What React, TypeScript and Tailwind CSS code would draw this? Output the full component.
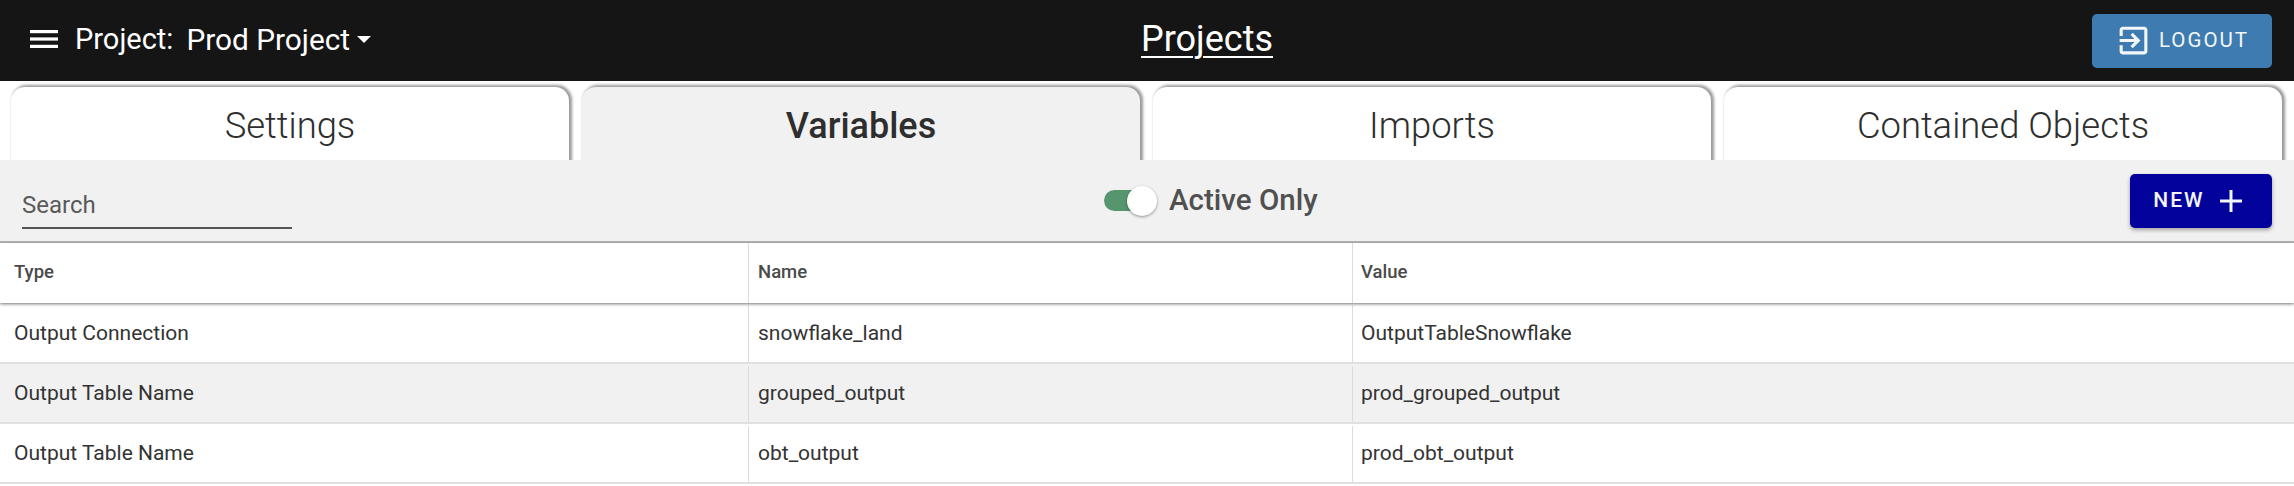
import React from 'react'

const TABS = ['Settings', 'Variables', 'Imports', 'Contained Objects']

const ROWS = [
  { type: 'Output Connection', name: 'snowflake_land', value: 'OutputTableSnowflake' },
  { type: 'Output Table Name', name: 'grouped_output', value: 'prod_grouped_output' },
  { type: 'Output Table Name', name: 'obt_output', value: 'prod_obt_output' },
]

const Header = () => (
  <div className="relative flex h-[81px] items-center justify-between bg-[#151515] pr-[22px] pl-[30px] text-white">
    <div className="mt-[-2px] flex items-center">
      <svg width="28" height="22" viewBox="0 0 28 22" fill="white">
        <rect x="0" y="2" width="28" height="3.2" />
        <rect x="0" y="9.4" width="28" height="3.2" />
        <rect x="0" y="16.8" width="28" height="3.2" />
      </svg>
      <span className="ml-[17px] text-[29px] leading-none">Project:</span>
      <span className="ml-[13px] text-[29.8px] leading-none">Prod Project</span>
      <svg className="ml-[7px]" width="14" height="7" viewBox="0 0 14 7" fill="white">
        <path d="M0 0h14L7 7z" />
      </svg>
    </div>
    <a className="absolute top-[17px] left-[1141px] text-[36px] leading-[44px] underline underline-offset-[5px] decoration-[2px]">Projects</a>
    <button className="flex h-[54px] w-[180px] items-center justify-center gap-[7px] rounded-[5px] bg-[#3e7bb0] text-[20.5px] tracking-[2px] text-[#f4f7fa]">
      <svg width="37" height="37" viewBox="0 0 24 24" fill="currentColor">
        <path d="M10.09 15.59L11.5 17l5-5-5-5-1.41 1.41L12.67 11H3v2h9.67l-2.58 2.59zM19 3H5c-1.11 0-2 .9-2 2v4h2V5h14v14H5v-4H3v4c0 1.1.89 2 2 2h14c1.1 0 2-.9 2-2V5c0-1.1-.9-2-2-2z" />
      </svg>
      LOGOUT
    </button>
  </div>
)

const Tabs = () => (
  <div className="flex h-[79px] gap-[13px] overflow-hidden bg-white pt-[6px] pr-[11px] pl-[11px]">
    {TABS.map((t) => (
      <div
        key={t}
        className={
          'flex h-[100px] w-[558px] justify-center rounded-t-[14px] pt-[16px] leading-[46px] text-[#2e2e2e] shadow-[2px_-1px_3px_1px_rgba(0,0,0,0.4)] ' +
          (t === 'Variables' ? 'bg-[#f1f1f1] text-[36px] font-medium' : 'bg-white text-[36.4px] font-light')
        }
      >
        {t}
      </div>
    ))}
  </div>
)

const Toolbar = () => (
  <div className="relative flex h-[83px] items-center justify-between border-b-2 border-[#b5b5b5] bg-[#f1f1f1] pr-[22px] pl-[22px]">
    <div className="mt-[2px] flex h-[54px] w-[270px] items-center border-b-2 border-[#555555] pt-[8px] text-[24px] text-[#5a5a5a]">
      Search
    </div>
    <div className="absolute left-[1104px] flex items-center">
      <div className="relative h-[21px] w-[44px] rounded-full bg-[#55966f]">
        <div className="absolute top-[-4px] right-[-9px] h-[30px] w-[30px] rounded-full bg-white shadow-[0_1px_3px_rgba(0,0,0,0.4)]" />
      </div>
      <span className="ml-[21px] text-[29.5px] font-medium leading-none text-[#505050]">Active Only</span>
    </div>
    <button className="flex h-[54px] w-[142px] items-center justify-center gap-[15px] rounded-[5px] bg-[#03039b] pr-[7px] text-[21px] font-medium tracking-[2px] text-[#f4f4fb] shadow-[0_2px_4px_rgba(0,0,0,0.35)]">
      NEW
      <svg width="22" height="22" viewBox="0 0 22 22" fill="currentColor">
        <rect x="0" y="9.5" width="22" height="3" />
        <rect x="9.5" y="0" width="3" height="22" />
      </svg>
    </button>
  </div>
)

const Table = () => (
  <div className="text-[21px] text-[#333333]">
    <div className="relative z-10 grid h-[60px] grid-cols-[749px_604px_1fr] items-stretch text-[18.5px] font-medium text-[#4a4a4a] shadow-[0_1px_3px_rgba(0,0,0,0.55)]">
      {['Type', 'Name', 'Value'].map((h, i) => (
        <div key={h} className={'flex items-center ' + (i === 0 ? 'pl-[14px] ' : i === 1 ? 'pl-[9px] ' : 'pl-[8px] ') + (i < 2 ? 'border-r border-[#dcdcdc]' : '')}>
          {h}
        </div>
      ))}
    </div>
    {ROWS.map((r, i) => (
      <div
        key={r.name}
        className={
          'grid grid-cols-[749px_604px_1fr] border-b-2 border-[#e0e0e0] pt-[2px] ' + (i === 0 ? 'h-[61px] ' : 'h-[60px] ') + (i === 1 ? 'bg-[#f1f1f1]' : 'bg-white')
        }
      >
        <div className="flex items-center border-r border-[#dcdcdc] pl-[14px]">{r.type}</div>
        <div className="flex items-center border-r border-[#dcdcdc] pl-[9px]">{r.name}</div>
        <div className="flex items-center pl-[8px]">{r.value}</div>
      </div>
    ))}
  </div>
)

export default function App() {
  return (
    <div className="h-[486px] w-[2294px] overflow-hidden bg-white font-['Roboto',sans-serif]">
      <Header />
      <Tabs />
      <Toolbar />
      <Table />
    </div>
  )
}
